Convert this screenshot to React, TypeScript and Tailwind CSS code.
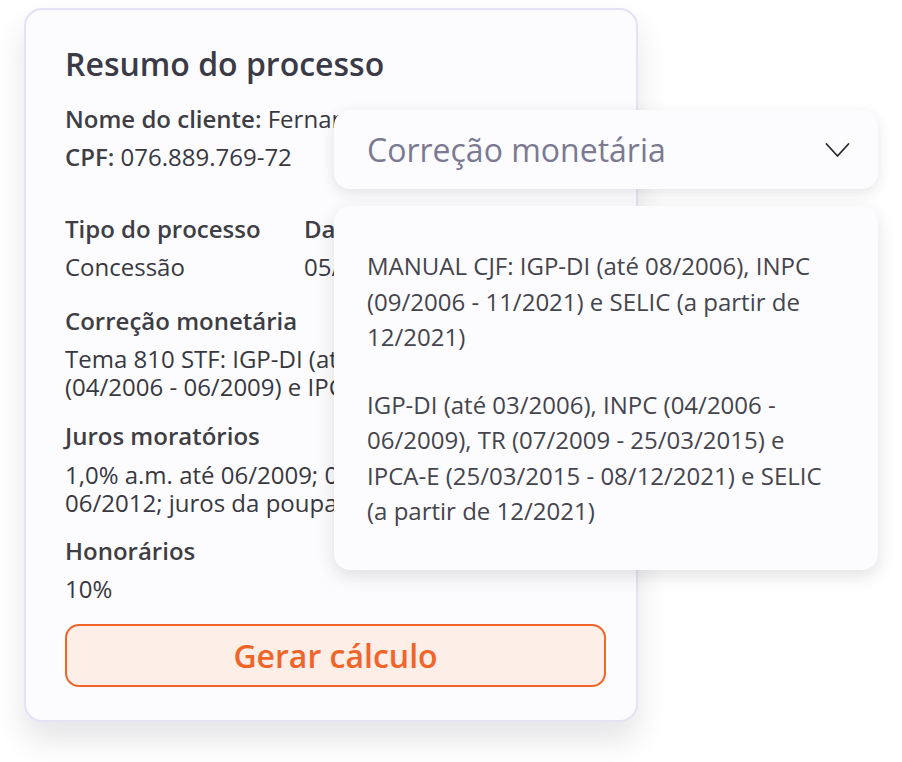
import React from 'react';

const font = { fontFamily: '"Open Sans", "Noto Sans", sans-serif' };

const MENU_OPTIONS = [
  [
    'MANUAL CJF: IGP-DI (até 08/2006), INPC',
    '(09/2006 - 11/2021) e SELIC (a partir de',
    '12/2021)',
  ],
  [
    'IGP-DI (até 03/2006), INPC (04/2006 -',
    '06/2009), TR (07/2009 - 25/03/2015) e',
    'IPCA-E (25/03/2015 - 08/12/2021) e SELIC',
    '(a partir de 12/2021)',
  ],
];

const Lines: React.FC<{ lines: string[]; className?: string }> = ({ lines, className }) => (
  <div className={className}>
    {lines.map((l) => (
      <div key={l} className="whitespace-nowrap">
        {l}
      </div>
    ))}
  </div>
);

const ChevronDown = () => (
  <svg width="25" height="16" viewBox="0 0 25 16" fill="none">
    <polyline points="1.5,2 12.5,14 23.5,2" stroke="#26262e" strokeWidth="1.8" strokeLinejoin="round" strokeLinecap="round" />
  </svg>
);

export default function App() {
  return (
    <div className="relative w-[902px] h-[762px] bg-white overflow-hidden" style={font}>
      {/* Summary card */}
      <div className="ml-[24px] mt-[8px] w-[614px] h-[714px] rounded-[18px] border-2 border-[#e3e2f7] bg-[#fcfcfe] shadow-[0_18px_30px_rgba(40,40,60,0.12)] pl-[39px] pr-[30px] pt-[34px] text-[#38383e]">
        <h2 className="text-[32px] leading-[40px] font-semibold text-[#3b3b47]">Resumo do processo</h2>

        <div className="mt-[16px] text-[24px] leading-[38px]">
          <div className="whitespace-nowrap">
            <span className="font-semibold text-[#3e3e44]">Nome do cliente:</span> Fernanda Ribeiro
          </div>
          <div className="whitespace-nowrap">
            <span className="font-semibold text-[#3e3e44]">CPF:</span> 076.889.769-72
          </div>
        </div>

        <div className="mt-[39px] grid grid-cols-[239px_1fr] text-[24px] leading-[28px]">
          <div>
            <div className="font-semibold text-[#3e3e44]">Tipo do processo</div>
            <div className="mt-[10px]">Concessão</div>
          </div>
          <div>
            <div className="font-semibold text-[#3e3e44]">Data de início</div>
            <div className="mt-[10px]">05/03/2004</div>
          </div>
        </div>

        <div className="mt-[26px] text-[24px] leading-[28px]">
          <div className="font-semibold text-[#3e3e44]">Correção monetária</div>
          <Lines className="mt-[10px]" lines={['Tema 810 STF: IGP-DI (até 03/2006)', '(04/2006 - 06/2009) e IPCA-E']} />
        </div>

        <div className="mt-[21px] text-[24px] leading-[28px]">
          <div className="font-semibold text-[#3e3e44]">Juros moratórios</div>
          <Lines className="mt-[11px]" lines={['1,0% a.m. até 06/2009; 0,5% a.m.', '06/2012; juros da poupança']} />
        </div>

        <div className="mt-[20px] text-[24px] leading-[28px]">
          <div className="font-semibold text-[#3e3e44]">Honorários</div>
          <div className="mt-[10px]">10%</div>
        </div>

        <button
          type="button"
          className="mt-[21px] w-[541px] h-[63px] rounded-[14px] border-2 border-[#f0652a] bg-[#fdeee7] text-[32px] font-semibold text-[#f0652a]"
        >
          Gerar cálculo
        </button>
      </div>

      {/* Select trigger */}
      <div className="absolute left-[334px] top-[110px] w-[544px] h-[79px] rounded-[16px] bg-[#fcfcfe] shadow-[0_4px_14px_rgba(40,40,60,0.12)] flex items-center justify-between pl-[33px] pr-[28px]">
        <span className="text-[32px] text-[#7b7a92]">Correção monetária</span>
        <ChevronDown />
      </div>

      {/* Options menu */}
      <div className="absolute left-[334px] top-[206px] w-[544px] h-[364px] rounded-[16px] bg-[#fcfcfe] shadow-[0_6px_18px_rgba(40,40,60,0.14)] pl-[33px] pt-[42px] text-[24px] leading-[35.5px] text-[#45454d]">
        <Lines lines={MENU_OPTIONS[0]} />
        <Lines className="mt-[32px]" lines={MENU_OPTIONS[1]} />
      </div>
    </div>
  );
}
